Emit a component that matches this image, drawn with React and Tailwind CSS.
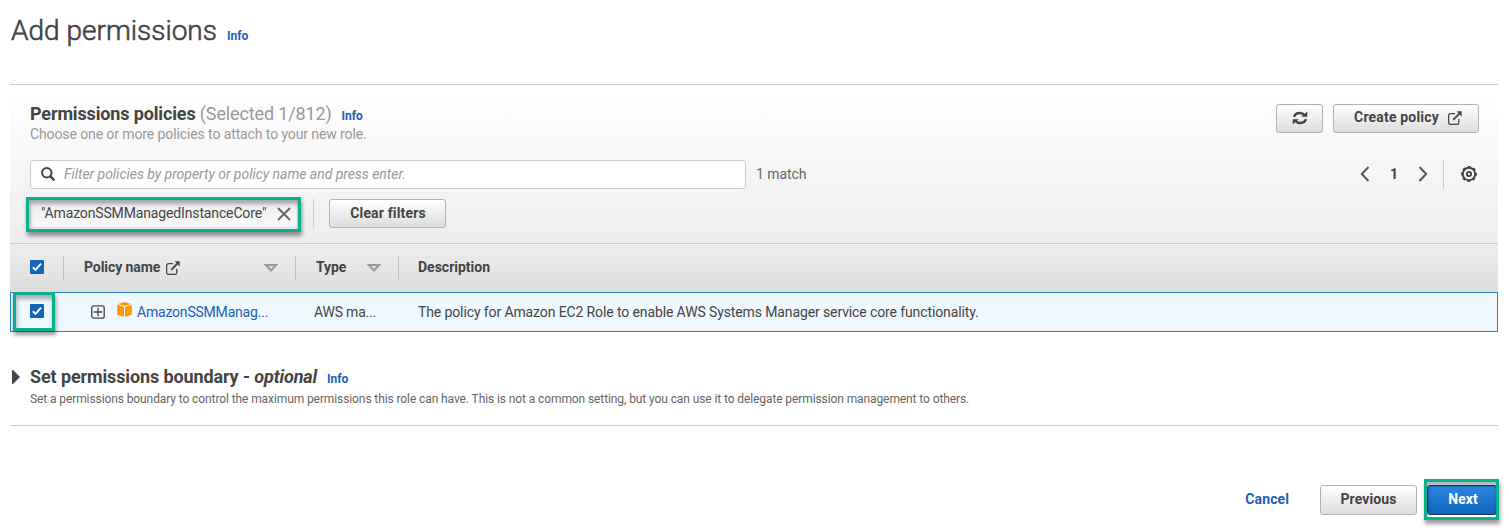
import React from 'react';

const Info = ({ className = '' }) => (
  <a className={`text-[12px] leading-[16px] font-bold text-[#1b5fba] ${className}`}>Info</a>
);

const External = ({ className = '' }) => (
  <svg className={className} width="14" height="14" viewBox="0 0 14 14" fill="none" stroke="#444" strokeWidth="1.3">
    <path d="M7 2.6H2.6a2 2 0 0 0-2 2v6.8a2 2 0 0 0 2 2h6.2a2 2 0 0 0 2-2V8" />
    <path d="M5.2 8.8L11.5 2.5" strokeWidth="1.8" />
    <path d="M8.6 .3h5.1v5.1z" fill="#444" stroke="none" />
  </svg>
);

const Check = () => (
  <span className="flex h-[14px] w-[14px] items-center justify-center rounded-[1px] bg-[#1166bb]">
    <svg width="12" height="12" viewBox="0 0 12 12" fill="none" stroke="#fff" strokeWidth="2">
      <path d="M1.8 6.3l2.7 2.6 5.6-6.2" />
    </svg>
  </span>
);

const Sort = ({ className = '' }) => (
  <svg className={className} width="14" height="8" viewBox="0 0 14 8" fill="none" stroke="#999" strokeWidth="2">
    <path d="M1.9 1h10.2L7 6.5z" />
  </svg>
);

const Highlight = ({ className = '' }) => (
  <span className={`pointer-events-none absolute border-[3px] border-[#08b08e] shadow-[1px_4px_4px_rgba(0,0,0,0.4),inset_1px_4px_4px_rgba(0,0,0,0.3)] ${className}`} />
);

const Button = ({ className = '', children }) => (
  <button className={`flex items-center justify-center rounded-[3px] border border-[#b2b2b2] bg-linear-to-b from-white to-[#dddddd] text-[14px] leading-[20px] font-bold text-[#444] ${className}`}>
    {children}
  </button>
);

export default function App() {
  return (
    <main className="h-[531px] w-[1509px] overflow-hidden bg-white pr-[11px] pl-[10px] font-[Roboto,sans-serif] text-[14px] leading-[20px] whitespace-nowrap text-[#444]">
      <header className="flex h-[84px] items-baseline pt-[13px] pl-px">
        <h1 className="text-[28px] leading-[36px] font-light [-webkit-text-stroke:0.6px_#444]">Add permissions</h1>
        <Info className="ml-[10px]" />
      </header>

      <section className="border-t border-[#ccc]">
        <div className="h-[158px] bg-linear-to-b from-white to-[#eeeeee] pr-[19px] pl-[20px]">
          <div className="flex h-[75px] justify-between pt-[18px]">
            <div>
              <div className="flex h-[21px] items-baseline">
                <h2 className="text-[18px] leading-[21px] font-bold tracking-[-0.14px]">
                  Permissions policies <span className="font-normal text-[#999]">(Selected 1/812)</span>
                </h2>
                <Info className="ml-[10px]" />
              </div>
              <p className="tracking-[-0.105px] text-[#999]">Choose one or more policies to attach to your new role.</p>
            </div>
            <div className="mt-px flex h-[29px] gap-[10px]">
              <Button className="w-[47px] pb-px">
                <svg width="16" height="16" viewBox="0 0 16 16" fill="none" stroke="#444" strokeWidth="2.3">
                  <path d="M2 6.8c.8-2.4 3-3.8 5.7-3.8 2.2 0 3.8.8 5 2.3M14 9.2c-.8 2.4-3 3.8-5.7 3.8-2.2 0-3.8-.8-5-2.3" />
                  <path d="M15.3 1.4v5.4H9.2zM.7 14.6V9.2h6.1z" fill="#444" stroke="none" />
                </svg>
              </Button>
              <Button className="w-[146px] gap-[9px] pb-[3px] pl-[4px]">
                <span className="tracking-[0.18px]">Create policy</span> <External className="mt-[2px]" />
              </Button>
            </div>
          </div>

          <div className="flex h-[29px] items-center">
            <label className="flex h-[29px] w-[716px] items-center rounded-[3px] border border-[#ccc] bg-white pl-[10px]">
              <svg className="mb-px" width="14" height="14" viewBox="0 0 14 14" fill="none" stroke="#444" strokeWidth="2">
                <circle cx="5.8" cy="5.8" r="4.7" />
                <path d="M9.2 9.2l4.2 4.2" strokeWidth="2.4" />
              </svg>
              <span className="mb-[2px] ml-[9px] tracking-[-0.035px] text-[#999] italic">Filter policies by property or policy name and press enter.</span>
            </label>
            <span className="mb-[2px] ml-[10px] tracking-[-0.08px] text-[#666]">1 match</span>
            <div className="ml-auto flex h-[29px] items-center">
              <svg className="mb-px" width="10" height="16" viewBox="0 0 10 16" fill="none" stroke="#555" strokeWidth="2"><path d="M8.5 1L1.8 8l6.7 7" /></svg>
              <b className="mb-[2px] w-[48px] text-center font-bold">1</b>
              <svg className="mb-px" width="10" height="16" viewBox="0 0 10 16" fill="none" stroke="#555" strokeWidth="2"><path d="M1.5 1l6.7 7-6.7 7" /></svg>
              <span className="mr-[17px] ml-[15px] h-[29px] w-px bg-[#ccc]" />
              <svg className="mr-[2px] mb-px" width="16" height="16" viewBox="0 0 16 16" fill="none" stroke="#444" strokeWidth="1.9">
                <circle cx="8" cy="8" r="6.2" />
                <circle cx="8" cy="8" r="7.1" strokeWidth="1.7" strokeDasharray="3 2.576" strokeDashoffset="1.5" />
                <circle cx="8" cy="8" r="2.1" />
              </svg>
            </div>
          </div>

          <div className="flex h-[49px] items-center">
            <div className="relative flex h-[29px] w-[268px] items-center rounded-[2px] border border-[#ddd] bg-linear-to-b from-[#eee] to-[#f8f8f8] pl-[10px]">
              <span className="mb-[2px] tracking-[-0.14px]">"AmazonSSMManagedInstanceCore"</span>
              <svg className="mt-px ml-[11px]" width="14" height="14" viewBox="0 0 14 14" fill="none" stroke="#666" strokeWidth="2"><path d="M1 1l12 12M13 1L1 13" /></svg>
              <Highlight className="-top-[3px] -left-[5px] h-[35px] w-[275px]" />
            </div>
            <span className="ml-[15px] h-[29px] w-px bg-[#ccc]" />
            <Button className="ml-[15px] h-[29px] w-[117px] pb-px pl-px tracking-[0.15px]">Clear filters</Button>
          </div>
        </div>

        <div className="flex h-[49px] items-center border-t border-[#ccc] bg-linear-to-b from-[#eeeeee] to-[#dddddd] font-bold">
          <div className="flex h-[24px] w-[54px] items-center border-r border-[#bfbfbf] pb-[3px] pl-[20px]"><Check /></div>
          <div className="flex h-[24px] w-[232px] items-center border-r border-[#bfbfbf] pr-[17px] pl-[20px]">
            <span className="mb-[2px] tracking-[-0.08px]">Policy name</span> <External className="ml-[6px]" /><Sort className="ml-auto" />
          </div>
          <div className="flex h-[24px] w-[103px] items-center border-r border-[#bfbfbf] pr-[17px] pl-[20px]">
            <span className="mb-[2px] tracking-[-0.1px]">Type</span> <Sort className="ml-auto" />
          </div>
          <div className="mb-[2px] pl-[19px]">Description</div>
        </div>

        <div className="relative flex h-[40px] items-center border border-[#2b7fd3] bg-[#f0f8ff]">
          <div className="w-[80px] pb-[2px] pl-[19px]"><Check /></div>
          <svg width="14" height="14" viewBox="0 0 14 14" fill="none" stroke="#444" strokeWidth="1.3">
            <rect x=".8" y=".8" width="12.4" height="12.4" rx="2" /><path d="M2.8 7h8.4M7 2.8v8.4" />
          </svg>
          <svg className="mb-[5px] ml-[12px]" width="15" height="15" viewBox="0 0 15 15" fill="#f90">
            <path d="M.2 2.8L7 4.7V15L.2 12.8zM14.8 2.8L8 4.7V15l6.8-2.2zM1 2L7.5 0 14 2 7.5 3.9z" />
          </svg>
          <span className="ml-[5px] w-[177px] tracking-[-0.2px] text-[#1b5fba]">AmazonSSMManag...</span>
          <span className="w-[104px] tracking-[-0.2px]">AWS ma...</span>
          <span className="tracking-[-0.115px]">The policy for Amazon EC2 Role to enable AWS Systems Manager service core functionality.</span>
          <Highlight className="-top-px left-[2px] h-[39px] w-[42px]" />
        </div>
      </section>

      <section className="h-[94px] border-b border-[#ccc] pt-[34px]">
        <div className="flex h-[21px] items-center">
          <svg className="mt-px mr-[10px] ml-[2px]" width="8" height="14" viewBox="0 0 8 14"><path d="M0 0h1l7 7-7 7H0z" fill="#444" /></svg>
          <div className="flex items-baseline">
            <h2 className="text-[18px] leading-[21px] font-bold tracking-[-0.12px]">Set permissions boundary - <i>optional</i></h2>
            <Info className="ml-[10px]" />
          </div>
        </div>
        <p className="mt-[4px] ml-[20px] text-[12px] leading-[16px] tracking-[-0.097px] text-[#666]">
          Set a permissions boundary to control the maximum permissions this role can have. This is not a common setting, but you can use it to delegate permission management to others.
        </p>
      </section>

      <footer className="mt-[59px] flex h-[30px] items-center justify-end pr-px">
        <a className="mr-[31px] pb-[2px] font-bold tracking-[0.1px] text-[#1b5fba]">Cancel</a>
        <Button className="mr-[10px] h-[30px] w-[97px] pb-[2px] tracking-[0.1px]">Previous</Button>
        <div className="relative">
          <button className="flex h-[30px] w-[70px] items-center justify-center rounded-[3px] border border-[#12365f] bg-linear-to-b from-[#2b88e6] to-[#1166bb] pb-[2px] pl-[2px] font-bold text-white">Next</button>
          <Highlight className="-top-[6px] -left-[3px] h-[41px] w-[75px]" />
        </div>
      </footer>
    </main>
  );
}
